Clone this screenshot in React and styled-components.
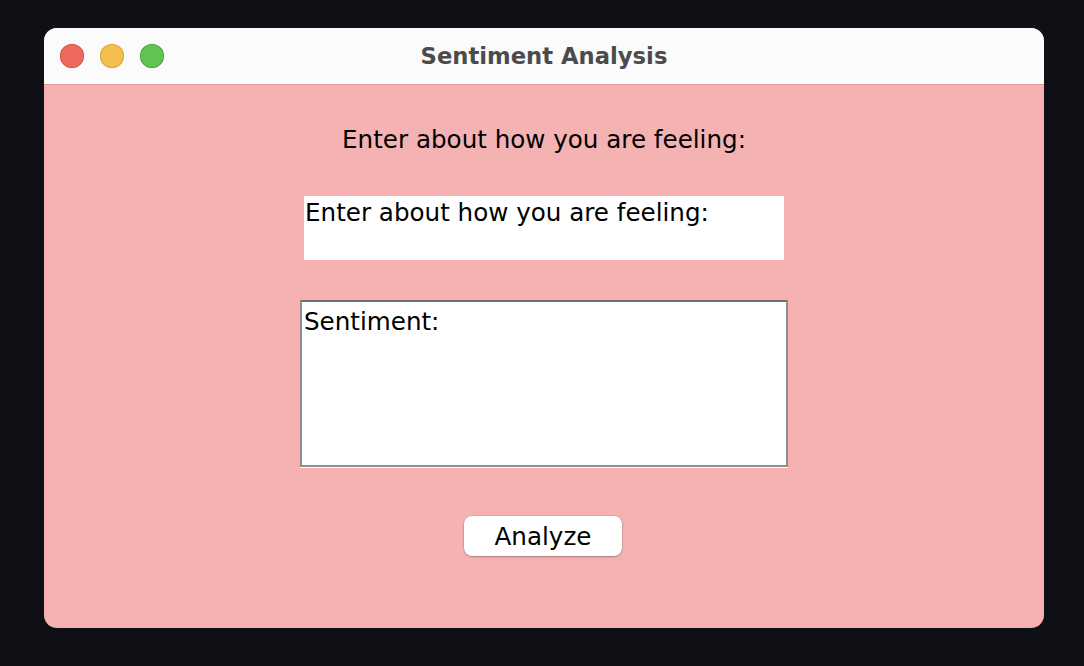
import styled, { createGlobalStyle } from "styled-components";

const GlobalStyle = createGlobalStyle`
  html, body {
    margin: 0;
    padding: 0;
    background: #0e1016;
  }
  body {
    font-family: "DejaVu Sans", "Liberation Sans", sans-serif;
  }
`;

const Screen = styled.div`
  width: 1084px;
  height: 666px;
  display: flex;
  align-items: flex-start;
  justify-content: flex-start;
  padding: 28px 0 0 44px;
  box-sizing: border-box;
`;

const Window = styled.div`
  width: 1000px;
  height: 600px;
  border-radius: 13px;
  overflow: hidden;
  display: flex;
  flex-direction: column;
  background: #f4b2b3;
`;

const TitleBar = styled.div`
  height: 56px;
  flex-shrink: 0;
  background: #fbfbfb;
  border-bottom: 1px solid #d99a9b;
  display: flex;
  align-items: center;
  position: relative;
  padding-left: 16px;
  gap: 16px;
`;

const Light = styled.span`
  width: 24px;
  height: 24px;
  border-radius: 50%;
  background: ${(p) => p.color};
  box-shadow: inset 0 0 0 1px ${(p) => p.edge};
`;

const Title = styled.div`
  position: absolute;
  left: 0;
  right: 0;
  text-align: center;
  font-family: "DejaVu Sans", sans-serif;
  font-weight: bold;
  font-size: 22.7px;
  color: #4b4b4b;
  pointer-events: none;
`;

const Body = styled.div`
  flex: 1;
  display: flex;
  flex-direction: column;
  align-items: center;
  padding-top: 41px;
`;

const Label = styled.div`
  font-size: 24.6px;
  line-height: 28px;
  color: #000;
`;

const TextField = styled.div`
  margin-top: 42px;
  width: 480px;
  height: 64px;
  background: #fff;
  box-sizing: border-box;
  padding: 3px 0 0 1px;
  font-size: 24.6px;
  line-height: 28px;
  color: #000;
  white-space: nowrap;
`;

const TextArea = styled.div`
  margin-top: 40px;
  width: 488px;
  height: 167px;
  box-sizing: border-box;
  background: #fff;
  border: 2px solid #8f8f8f;
  border-top-color: #6e6e6e;
  box-shadow: 0 1px 0 #fff;
  padding: 6px 0 0 2px;
  font-size: 24.6px;
  line-height: 28px;
  color: #000;
`;

const Button = styled.button`
  margin: 49px 2px 0 0;
  width: 158px;
  height: 40px;
  background: #fff;
  border: none;
  border-radius: 8px;
  box-shadow: 0 1px 2px rgba(0, 0, 0, 0.25), 0 0 0 0.5px rgba(0, 0, 0, 0.12);
  font-family: "DejaVu Sans", sans-serif;
  font-size: 24.6px;
  color: #000;
  padding: 0;
`;

export default function App() {
  return (
    <>
      <GlobalStyle />
      <Screen>
        <Window>
          <TitleBar>
            <Light color="#ee6a5f" edge="#d2574d" />
            <Light color="#f5bf4f" edge="#d9a33c" />
            <Light color="#61c554" edge="#4ea843" />
            <Title>Sentiment Analysis</Title>
          </TitleBar>
          <Body>
            <Label>Enter about how you are feeling:</Label>
            <TextField>Enter about how you are feeling:</TextField>
            <TextArea>Sentiment:</TextArea>
            <Button>Analyze</Button>
          </Body>
        </Window>
      </Screen>
    </>
  );
}
